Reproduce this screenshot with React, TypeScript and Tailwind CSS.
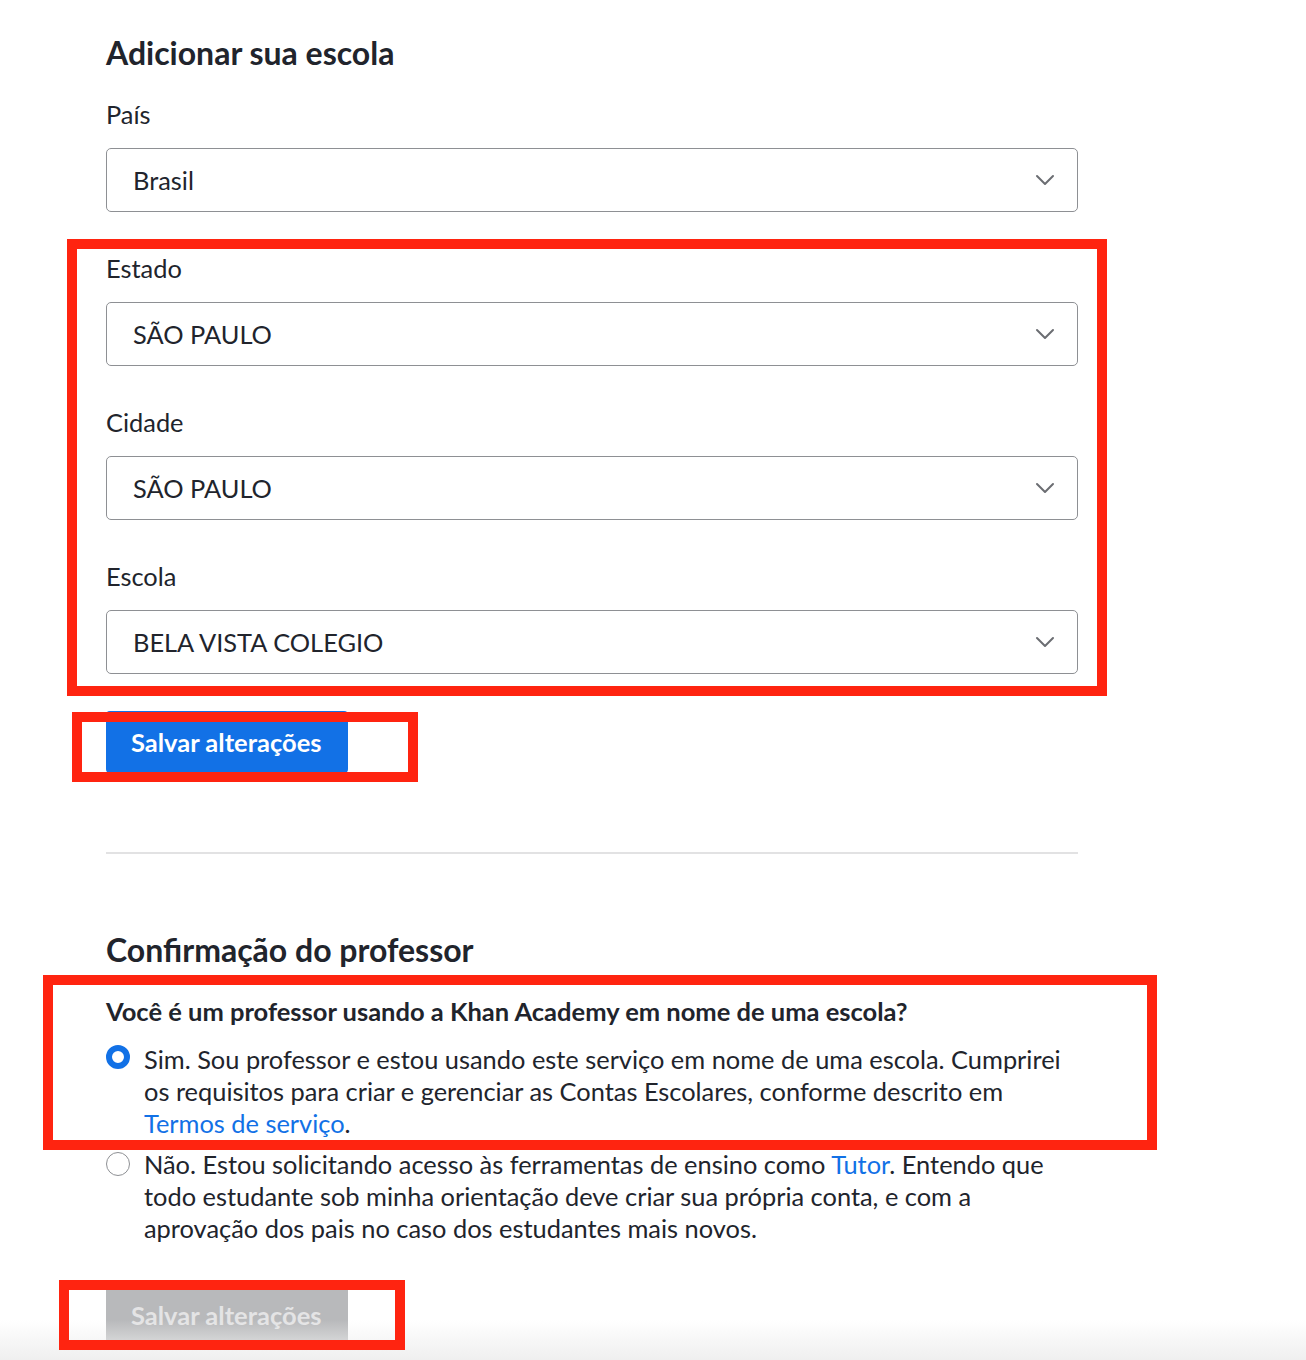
import React from 'react';

interface SelectFieldProps {
  label: string;
  value: string;
}

const Chevron: React.FC = () => (
  <svg width="20" height="12" viewBox="0 0 20 12" fill="none" className="text-[#6b6d72]">
    <path d="M2 2l8 8 8-8" stroke="currentColor" strokeWidth="2" strokeLinecap="round" strokeLinejoin="round" />
  </svg>
);

const SelectField: React.FC<SelectFieldProps> = ({ label, value }) => (
  <div className="flex flex-col">
    <label className="text-[25.4px] leading-[32px] text-[#21242c]">{label}</label>
    <div className="mt-[18px] flex h-[64px] items-center justify-between rounded-[5px] border border-[#8e9094] bg-white pl-[26px] pr-[22px]">
      <span className="text-[25.4px] text-[#21242c]">{value}</span>
      <Chevron />
    </div>
  </div>
);

const RedBox: React.FC<{ className: string }> = ({ className }) => (
  <div className={`pointer-events-none absolute border-[10px] border-[#ff2410] ${className}`} />
);

const App: React.FC = () => {
  return (
    <div
      className="relative h-[1360px] w-full overflow-hidden bg-white text-[#21242c]"
      style={{ fontFamily: 'Lato, "Open Sans", sans-serif' }}
    >
      <div className="ml-[106px] w-[972px] pt-[33px]">
        {/* School */}
        <h2 className="text-[32px] font-bold leading-[40px]">Adicionar sua escola</h2>

        <div className="mt-[25px] flex flex-col gap-[40px]">
          <SelectField label="País" value="Brasil" />
          <SelectField label="Estado" value="SÃO PAULO" />
          <SelectField label="Cidade" value="SÃO PAULO" />
          <SelectField label="Escola" value="BELA VISTA COLEGIO" />
        </div>

        <button className="mt-[37px] flex h-[62px] w-[242px] items-center rounded-[4px] bg-[#1271e6] pl-[25px] text-[25.5px] font-bold text-white">
          Salvar alterações
        </button>

        <div className="mt-[79px] h-[2px] bg-[#e2e2e3]" />

        {/* Teacher confirmation */}
        <h2 className="mt-[76px] text-[32px] font-bold leading-[40px]">Confirmação do professor</h2>

        <p className="mt-[25px] text-[25.5px] font-bold leading-[32px]">
          Você é um professor usando a Khan Academy em nome de uma escola?
        </p>

        <div className="mt-[16px] flex flex-col gap-[9px]">
          <div className="flex gap-[14px]">
            <span className="mt-[2px] h-[24px] w-[24px] shrink-0 rounded-full border-[6px] border-[#1271e6] bg-white" />
            <p className="text-[25.4px] leading-[32px]">
              Sim. Sou professor e estou usando este serviço em nome de uma escola. Cumprirei os requisitos para
              criar e gerenciar as Contas Escolares, conforme descrito em{' '}
              <a className="text-[#1271e6]">Termos de serviço</a>.
            </p>
          </div>
          <div className="flex gap-[14px]">
            <span className="mt-[4px] h-[24px] w-[24px] shrink-0 rounded-full border border-[#8e9094] bg-white" />
            <p className="text-[25.4px] leading-[32px]">
              Não. Estou solicitando acesso às ferramentas de ensino como <a className="text-[#1271e6]">Tutor</a>.
              Entendo que todo estudante sob minha orientação deve criar sua própria conta, e com a aprovação dos
              pais no caso dos estudantes mais novos.
            </p>
          </div>
        </div>

        <button
          disabled
          className="mt-[40px] flex h-[62px] w-[242px] items-center rounded-[4px] bg-[#b8b9bb] pl-[25px] text-[25.5px] font-bold text-[#e4e4e5]"
        >
          Salvar alterações
        </button>
      </div>

      {/* bottom fade */}
      <div className="pointer-events-none absolute bottom-0 left-0 h-[40px] w-full bg-gradient-to-b from-white/0 to-[#efefef]" />

      {/* annotation boxes */}
      <RedBox className="left-[67px] top-[239px] h-[457px] w-[1040px]" />
      <RedBox className="left-[72px] top-[712px] h-[70px] w-[346px]" />
      <RedBox className="left-[43px] top-[975px] h-[175px] w-[1114px]" />
      <RedBox className="left-[59px] top-[1280px] h-[70px] w-[346px]" />
    </div>
  );
};

export default App;
